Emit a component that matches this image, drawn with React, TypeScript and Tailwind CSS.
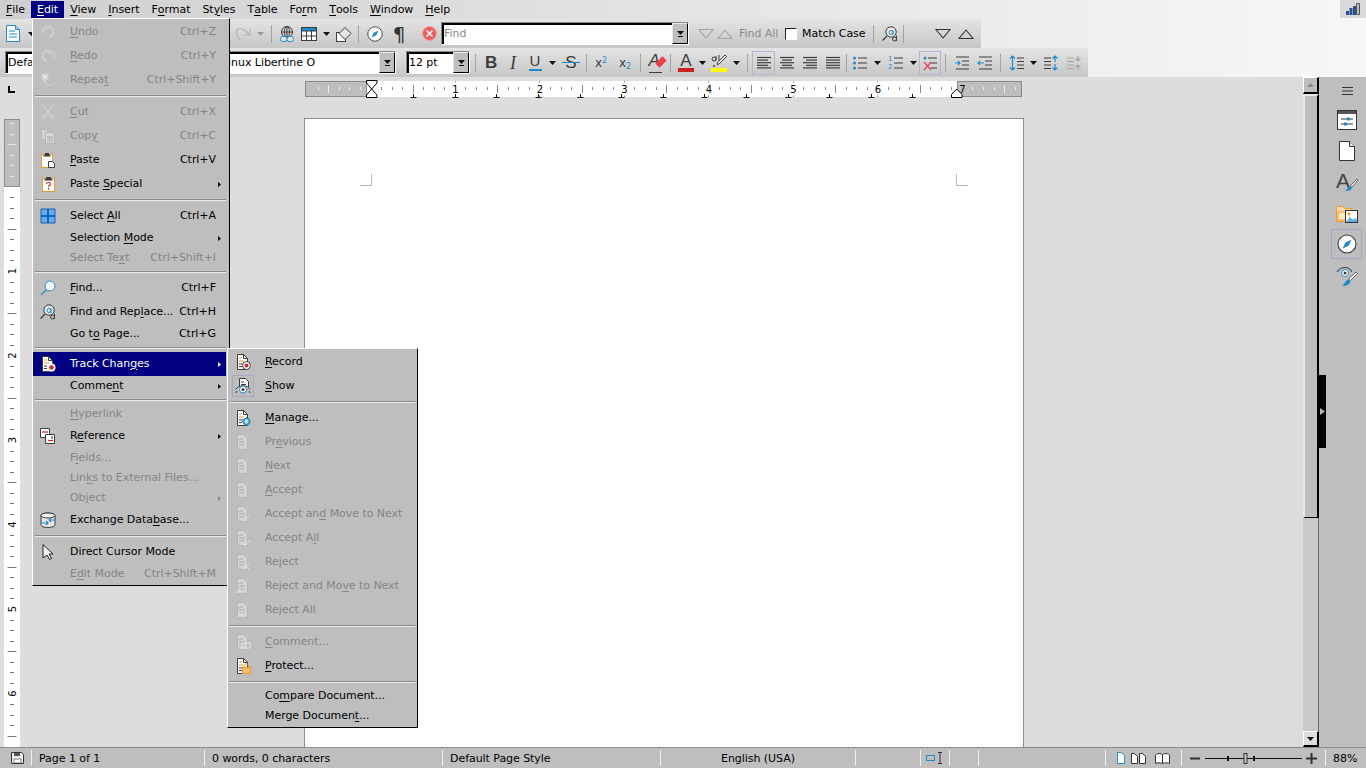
import React from 'react'

const DARK = '#3c3c3c'
const BLUE = '#1e8bcd'
const RED = '#d8232a'
const ORANGE = '#f0982e'
const GHOST = '#d2d2d2'
const GHOST2 = '#a9a9a9'

type SvgProps = { w?: number; h?: number; vb?: string; children: React.ReactNode }
const Ico = ({ w = 16, h = 16, vb, children }: SvgProps) => (
  <svg width={w} height={h} viewBox={vb ?? `0 0 ${w} ${h}`} fill="none" className="block shrink-0">
    {children}
  </svg>
)

// the little page with ruled lines that most Track Changes icons start from
const TrackPage = ({ children }: { children?: React.ReactNode }) => (
  <Ico>
    <path d="M2.5.5h6l4 4v11h-10z" fill="#fff" stroke={DARK} />
    <path d="M8.5.5v4h4" stroke={DARK} />
    <path d="M4 4h3M4 7h5" stroke={ORANGE} />
    <path d="M4 10h4M4 12.5h3" stroke={DARK} />
    {children}
  </Ico>
)

const GhostPage = ({ children }: { children?: React.ReactNode }) => (
  <Ico>
    <path d="M2.5.5h6l4 4v11h-10z" fill="#d4d4d4" stroke={GHOST2} strokeOpacity=".6" />
    <path d="M4 5h4M4 8h6M4 11h5" stroke={GHOST2} />
    {children}
  </Ico>
)

const GhostUndo = () => (
  <Ico>
    <path d="M2 5l5 6M2 5h6M2 5v6" stroke={GHOST} />
    <path d="M4 4c5-3 10 0 9 5-.4 2-2 4-4 4" stroke={GHOST} strokeWidth="1.3" />
  </Ico>
)
const GhostRedo = () => (
  <Ico>
    <path d="M14 5v6M14 5H8" stroke={GHOST} />
    <path d="M12 4C7 1 2 4 3 9c.4 2 2 4 4 4" stroke={GHOST} strokeWidth="1.3" />
  </Ico>
)
const GhostRepeat = () => (
  <Ico>
    <path d="M5 8c-1 5 6 8 9 3" stroke={GHOST} />
    <path d="M5 1v8M1 5h8M2 2l6 6M8 2L2 8" stroke="#ececec" />
  </Ico>
)
const GhostCut = () => (
  <Ico>
    <path d="M3 1l8 10M13 1L5 11" stroke={GHOST} strokeWidth="1.2" />
    <circle cx="4" cy="13" r="2" stroke={GHOST} />
    <circle cx="12" cy="13" r="2" stroke={GHOST} />
  </Ico>
)
const GhostCopy = () => (
  <Ico>
    <path d="M1.5 1.5h6v10h-6z" fill="#d4d4d4" stroke={GHOST2} strokeOpacity=".5" />
    <path d="M5.5 4.5h6l3 3v8h-9z" fill="#d8d8d8" stroke={GHOST2} strokeOpacity=".7" />
    <path d="M7 9h6M7 11h6M7 13h6" stroke={GHOST2} />
  </Ico>
)
const Paste = () => (
  <Ico>
    <rect x="1.5" y="2.5" width="11" height="13" fill="#fff" stroke={ORANGE} />
    <path d="M5 3V1h4v2h1.5v1.500h-7V3z" fill={DARK} />
    <path d="M8.500 9.500h4l2 2v4h-6z" fill="#fff" stroke={DARK} />
  </Ico>
)
const PasteSpecial = () => (
  <Ico>
    <rect x="2.500" y="2.500" width="12" height="13" fill="#fff" stroke={ORANGE} />
    <path d="M6 3V1h5v2h1.500v1.500h-8V3z" fill={DARK} />
    <path d="M6.500 8c0-2 4-2 4 0 0 1.500-2 1.500-2 3" stroke={RED} strokeWidth="1.200" />
    <path d="M8 12h1.200v1.500H8z" fill={RED} />
  </Ico>
)
const SelectAll = () => (
  <Ico>
    <rect x=".5" y=".5" width="15" height="15" fill="#1565b5" />
    <path d="M1.500 1.500h5.500v5.500H1.500zM9 1.500h5.500v5.500H9zM1.500 9h5.500v5.500H1.500zM9 9h5.500v5.500H9z" fill="#62aee8" />
  </Ico>
)
const Find = () => (
  <Ico>
    <circle cx="10" cy="6" r="5" fill="#f4f8fb" stroke={BLUE} />
    <path d="M6 10l-5 5" stroke={BLUE} strokeWidth="1.200" />
  </Ico>
)
const FindReplace = () => (
  <Ico>
    <circle cx="9" cy="6" r="5.200" fill="#ececec" stroke={DARK} />
    <path d="M5 10l-4.500 4.500" stroke={DARK} strokeWidth="1.200" />
    <circle cx="9" cy="6.500" r="2" stroke={BLUE} />
    <path d="M11 4v5" stroke={BLUE} />
    <circle cx="12.500" cy="13" r="2" stroke={DARK} />
    <path d="M14.500 9.500V15" stroke={DARK} />
  </Ico>
)
const Record = () => (
  <TrackPage>
    <circle cx="11.500" cy="11.500" r="4" fill="#fff" stroke={DARK} />
    <circle cx="11.500" cy="11.500" r="2" fill={RED} />
  </TrackPage>
)
const Show = () => (
  <Ico>
    <path d="M4.500.5h6l3 3v8h-9z" fill="#fff" stroke={DARK} />
    <path d="M6 4h3M6 6.500h5" stroke={DARK} />
    <path d="M.5 11.500c4-5 11-5 15 0" stroke={DARK} fill="#d5d5d5" />
    <circle cx="8" cy="11.500" r="3.500" fill="#fff" stroke={BLUE} />
    <circle cx="8" cy="11.500" r="1.500" fill={DARK} />
    <path d="M2 13l-1 2M14 13l1 2" stroke={DARK} />
  </Ico>
)
const Manage = () => (
  <TrackPage>
    <circle cx="11.500" cy="11.500" r="3" fill="#cfe6f6" stroke={BLUE} strokeWidth="1.600" />
    <path d="M11.500 7v2M11.500 14v2M7 11.500h2M14 11.500h2" stroke={BLUE} />
  </TrackPage>
)
const Protect = () => (
  <TrackPage>
    <rect x="7.500" y="9.500" width="8" height="6" fill="#f7b96b" stroke={ORANGE} />
    <path d="M9.500 9.500v-2c0-2 4-2 4 0v2" stroke={ORANGE} />
  </TrackPage>
)
const TrackBadge = () => (
  <Ico>
    <path d="M2.500.5h6l4 4v11h-10z" fill="#fff" stroke="#3c3c3c" />
    <path d="M8.500.5v4h4" stroke={DARK} />
    <path d="M4 4h3M4 7h5" stroke={ORANGE} />
    <path d="M4 10h3M4 12.500h3" stroke={DARK} />
    <circle cx="11.500" cy="11.500" r="4" fill="#fff" />
    <circle cx="11.500" cy="11.500" r="2.200" fill={RED} />
  </Ico>
)
const Reference = () => (
  <Ico>
    <path d="M.5.5h9v9h-9z" fill="#fff" stroke={DARK} />
    <path d="M2 4h6" stroke={RED} strokeWidth="1.200" />
    <path d="M5.500 6.500h9v9h-9z" fill="#fff" stroke={DARK} />
    <path d="M8 12.500h5" stroke={RED} strokeWidth="1.200" />
    <path d="M12 8v3" stroke={DARK} />
  </Ico>
)
const ExchangeDb = () => (
  <Ico>
    <ellipse cx="8" cy="3.500" rx="7" ry="2.500" fill="#efefef" stroke={DARK} />
    <path d="M1 3.500v9c0 2 3 3 7 3s7-1 7-3v-9" fill="#e6e6e6" stroke={DARK} />
    <ellipse cx="8" cy="3.500" rx="7" ry="2.500" fill="#f4f4f4" stroke={DARK} />
    <path d="M1 11h7M6 9l2 2-2 2M15 8H9M11 6L9 8l2 2" stroke={BLUE} strokeWidth="1.100" />
  </Ico>
)
const Cursor = () => (
  <Ico>
    <path d="M3 .5l10 9.500H9l2.500 4.500-2 1L7 11l-4 3z" fill="#f4f4f4" stroke="#222" />
  </Ico>
)

const GP = (d: string) => <path d={d} stroke="#e2e2e2" />

type MenuItem =
  | 'sep'
  | { t: string; k?: string; icon?: React.ReactNode; off?: boolean; sub?: boolean; on?: boolean; frame?: boolean; h?: boolean }

const editMenu: MenuItem[] = [
  { t: '&Undo', k: 'Ctrl+Z', icon: <GhostUndo />, off: true, h: true },
  { t: '&Redo', k: 'Ctrl+Y', icon: <GhostRedo />, off: true, h: true },
  { t: 'Repea&t', k: 'Ctrl+Shift+Y', icon: <GhostRepeat />, off: true, h: true },
  'sep',
  { t: '&Cut', k: 'Ctrl+X', icon: <GhostCut />, off: true, h: true },
  { t: 'Cop&y', k: 'Ctrl+C', icon: <GhostCopy />, off: true, h: true },
  { t: '&Paste', k: 'Ctrl+V', icon: <Paste />, h: true },
  { t: 'Paste &Special', icon: <PasteSpecial />, sub: true, h: true },
  'sep',
  { t: 'Select &All', k: 'Ctrl+A', icon: <SelectAll />, h: true },
  { t: 'Selection &Mode', sub: true },
  { t: 'Select Te&xt', k: 'Ctrl+Shift+I', off: true },
  'sep',
  { t: '&Find...', k: 'Ctrl+F', icon: <Find />, h: true },
  { t: 'Find and Rep&lace...', k: 'Ctrl+H', icon: <FindReplace />, h: true },
  { t: 'Go t&o Page...', k: 'Ctrl+G' },
  'sep',
  { t: 'Track Chan&ges', icon: <TrackBadge />, sub: true, on: true, h: true },
  { t: 'Comme&nt', sub: true },
  'sep',
  { t: '&Hyperlink', off: true },
  { t: 'R&eference', icon: <Reference />, sub: true, h: true },
  { t: 'F&ields...', off: true },
  { t: 'Lin&ks to External Files...', off: true },
  { t: 'Ob&ject', off: true, sub: true },
  { t: 'Exchange Data&base...', icon: <ExchangeDb />, h: true },
  'sep',
  { t: 'Direct Cursor Mode', icon: <Cursor />, h: true },
  { t: 'E&dit Mode', k: 'Ctrl+Shift+M', off: true },
]

const trackMenu: MenuItem[] = [
  { t: '&Record', icon: <Record />, h: true },
  { t: '&Show', icon: <Show />, h: true, frame: true },
  'sep',
  { t: '&Manage...', icon: <Manage />, h: true },
  { t: 'Pr&evious', icon: <GhostPage />, off: true, h: true },
  { t: '&Next', icon: <GhostPage />, off: true, h: true },
  { t: '&Accept', icon: <GhostPage />, off: true, h: true },
  { t: 'Accept an&d Move to Next', icon: <GhostPage>{GP('M9 15l5-5')}</GhostPage>, off: true, h: true },
  { t: 'Accept A&ll', icon: <GhostPage>{GP('M8 14l3 1 4-5')}</GhostPage>, off: true, h: true },
  { t: 'Re&ject', icon: <GhostPage>{GP('M9 10l5 5M14 10l-5 5')}</GhostPage>, off: true, h: true },
  { t: 'Reject and Mo&ve to Next', icon: <GhostPage>{GP('M1 15l5-5')}</GhostPage>, off: true, h: true },
  { t: 'Reject All', icon: <GhostPage>{GP('M3 10l5 5M8 10l-5 5')}</GhostPage>, off: true, h: true },
  'sep',
  { t: '&Comment...', icon: <GhostPage>{GP('M7 9h8v5H7z')}</GhostPage>, off: true, h: true },
  { t: '&Protect...', icon: <Protect />, h: true },
  'sep',
  { t: 'Co&mpare Document...' },
  { t: 'Merge Documen&t...' },
]

const Mn = ({ t }: { t: string }) => {
  const i = t.indexOf('&')
  if (i < 0) return <>{t}</>
  return (
    <>
      {t.slice(0, i)}
      <u className="underline-offset-2">{t[i + 1]}</u>
      {t.slice(i + 2)}
    </>
  )
}

const MenuRows = ({ items }: { items: MenuItem[] }) => (
  <>
    {items.map((m, i) => {
      if (m === 'sep') {
        return (
          <div key={i} className="flex h-[8px] items-center pl-[2px]">
            <div className="h-[2px] w-full border-t border-[#8a8a8a] bg-[#ececec]" />
          </div>
        )
      }
      return (
        <div
          key={i}
          className={`flex items-center whitespace-nowrap ${m.h ? 'h-[24px]' : 'h-[20px]'} ${
            m.on ? 'bg-[#000080] text-white' : m.off ? 'text-[#858585]' : 'text-black'
          }`}
        >
          <div className="flex w-[37px] shrink-0 pl-[7px]">
            <span className="relative block">
              {m.frame && <span className="absolute -inset-[3px] border border-[#a6a6c8]" />}
              {m.icon}
            </span>
          </div>
          <span>
            <Mn t={m.t} />
          </span>
          {m.k && <span className="ml-auto pr-[10px]">{m.k}</span>}
          {m.sub && (
            <svg width="3" height="5" viewBox="0 0 3 5" className="ml-auto mr-[5px]">
              <path d="M0 0l3 2.500L0 5z" fill={m.on ? '#fff' : m.off ? '#858585' : '#000'} />
            </svg>
          )}
        </div>
      )
    })}
  </>
)

const menuNames = ['&File', '&Edit', '&View', '&Insert', 'F&ormat', 'St&yles', 'T&able', 'Fo&rm', '&Tools', '&Window', '&Help']

const Tb = ({ w = 'w-[22px]', children }: { w?: string; children?: React.ReactNode }) => (
  <div className={`flex h-full shrink-0 items-center justify-center ${w}`}>{children}</div>
)
const Dd = ({ w = 'w-[12px]', off }: { w?: string; off?: boolean }) => (
  <Tb w={w}>
    <svg width="7" height="4" viewBox="0 0 7 4">
      <path d="M0 0h7L3.500 4z" fill={off ? '#9b9b9b' : '#111'} />
    </svg>
  </Tb>
)
const Sep = ({ w = 'w-[9px]' }: { w?: string }) => (
  <Tb w={w}>
    <div className="h-[18px] w-px bg-[#a3a3a3]" />
  </Tb>
)

const Combo = ({ w, children, muted }: { w: string; children?: React.ReactNode; muted?: boolean }) => (
  <div className={`flex h-[23px] shrink-0 items-stretch border border-t-[#8a8a8a] border-l-[#8a8a8a] border-r-white border-b-white ${w}`}>
    <div className="flex flex-1 items-stretch overflow-hidden border-t-2 border-l-2 border-black bg-white">
      <span className={`truncate leading-[18px] ${muted ? 'text-[#8a8a8a]' : 'text-black'}`}>{children}</span>
    </div>
    <div className="flex w-[16px] items-center justify-center border border-t-[#e8e8e8] border-l-[#e8e8e8] border-r-black border-b-black bg-[#bebebe]">
      <svg width="7" height="6" viewBox="0 0 7 6">
        <path d="M0 0h7L3.500 4z" fill="#111" />
        <path d="M1 5.500h5" stroke="#111" />
      </svg>
    </div>
  </div>
)

const Tri = ({ up, off }: { up?: boolean; off?: boolean }) => (
  <svg width="16" height="10" viewBox="0 0 16 10" fill="none">
    <path d={up ? 'M1 9.500h14L8 1z' : 'M1 .5h14L8 9z'} stroke={off ? '#a5a5a5' : '#333'} strokeWidth="1.100" />
  </svg>
)

const LinesIcon = ({ rows }: { rows: [number, number][] }) => (
  <Ico>
    {rows.map(([x, l], i) => (
      <path key={i} d={`M${x} ${2.5 + i * 2.6}h${l}`} stroke={DARK} strokeWidth="1.200" />
    ))}
  </Ico>
)

const Navigator = ({ size = 16 }: { size?: number }) => (
  <Ico w={size} h={size} vb="0 0 16 16">
    <circle cx="8" cy="8" r="7.200" fill="#fff" stroke={DARK} strokeWidth=".9" />
    <path d="M11.500 4.500L9.300 9.300 4.500 11.500l2.200-4.800z" fill={BLUE} />
  </Ico>
)

const RulerTop = () => {
  const o = 65.4
  const step = 84.5 / 8
  const ticks = []
  for (let i = -5; i <= 61; i++) {
    if (i % 8 === 0) continue
    const x = Math.round(o + i * step) + 0.5
    const half = i % 4 === 0
    const grey = i < 0 || i > 55
    ticks.push(
      <path key={i} d={half ? `M${x} 4v8` : `M${x} 6v3`} stroke={grey ? '#ececec' : '#8a8a8a'} />,
    )
  }
  return (
    <svg width="717" height="16" viewBox="0 0 717 16" className="block overflow-visible">
      <rect x="0" y="0" width="717" height="16" fill="#fff" />
      <rect x=".5" y=".5" width="61" height="15" fill="#bebebe" stroke="#8a8a8a" />
      <rect x="652.500" y=".5" width="64" height="15" fill="#bebebe" stroke="#8a8a8a" />
      {ticks}
      {[1, 2, 3, 4, 5, 6].map((n) => (
        <path key={n} d={`M${Math.round(o + n * 84.5) + 0.5} 0v1.500M${Math.round(o + n * 84.5) + 0.5} 14.500v1.500`} stroke="#8a8a8a" />
      ))}
      {[...Array(13)].map((_, k) => {
        const x = Math.round(66.6 + 41.6 * (k + 1)) + 0.5
        return <path key={k} d={`M${x} 13v3.500M${x - 3} 16.500h6`} stroke="#111" />
      })}
      <path d="M61.500 -.5H72V2L66.700 8 61.500 2zM66.700 8L72 14v2.500H61.500V14z" fill="#fff" stroke="#000" />
      <path d="M651.700 8L657 13.500v3h-10.500v-3z" fill="#fff" stroke="#000" />
      {[1, 2, 3, 4, 5, 6, 7].map((n) => (
        <text key={n} x={o + n * 84.5 + 0.5} y="12" textAnchor="middle" fontSize="10" fill="#000" className="font-['DejaVu_Sans']">
          {n}
        </text>
      ))}
    </svg>
  )
}

const RulerLeft = () => {
  const o = 67.5
  const step = 84.5 / 8
  const ticks = []
  for (let i = -6; i <= 52; i++) {
    if (i % 8 === 0) continue
    const y = Math.round(o + i * step) + 0.5
    const half = i % 4 === 0
    ticks.push(<path key={i} d={half ? `M3.500 ${y}h9` : `M6 ${y}h4`} stroke={i < 0 ? '#e4e4e4' : '#777'} />)
  }
  return (
    <svg width="16" height="628" viewBox="0 0 16 628" className="block">
      <rect width="16" height="628" fill="#fff" />
      <rect x=".5" y=".5" width="15" height="67" fill="#bebebe" stroke="#8a8a8a" />
      {ticks}
      {[1, 2, 3, 4, 5, 6].map((n) => {
        const y = o + n * 84.5
        return (
          <text key={n} x="8" y={y + 3.500} textAnchor="middle" fontSize="10" fill="#000" transform={`rotate(-90 8 ${y})`} className="font-['DejaVu_Sans']">
            {n}
          </text>
        )
      })}
    </svg>
  )
}

const StatusCell = ({ w, children, center }: { w: string; children?: React.ReactNode; center?: boolean }) => (
  <div className={`flex h-full shrink-0 items-center pt-[2px] ${w} ${center ? 'justify-center' : 'pl-[7px]'}`}>{children}</div>
)
const StatusSep = () => <div className="h-[16px] w-px shrink-0 self-center border-r border-[#efefef] bg-[#808080]" />

export default function App() {
  return (
    <div className="relative flex h-[768px] w-[1366px] flex-col overflow-hidden bg-[#dedddb] font-['DejaVu_Sans',sans-serif] text-[11px] tracking-[-0.05px] text-black">
      {/* header: menu bar and two toolbars on a sideways gradient */}
      <div className="flex h-[77px] shrink-0 flex-col bg-linear-to-r from-[#cfcfcf] via-[#e4e4e4] to-[#f7f7f7]">
        <div className="flex h-[19px] shrink-0 items-start justify-between">
          <div className="flex pt-px">
            {menuNames.map((n) => (
              <div key={n} className={`flex h-[17px] items-center px-[6px] pt-px ${n === '&Edit' ? 'bg-[#000080] text-white' : ''}`}>
                <Mn t={n} />
              </div>
            ))}
          </div>
          <div className="flex h-[18px] w-[26px] items-center justify-center bg-[#d9d9d9]">
            <svg width="14" height="12" viewBox="0 0 14 12">
              <path d="M0 8h3v4H0zM3.500 5h3v7h-3zM7 3h3v9H7z" fill="#2f4f8f" />
              <path d="M10.500.5h3v11h-3z" fill="#bcbcbc" stroke="#555" />
            </svg>
          </div>
        </div>

        <div className="flex h-[29px] w-[981px] shrink-0 items-center bg-linear-to-b from-[#e4e4e4] to-[#c6c6c6]">
          <Tb w="w-[26px]">
            <svg width="14" height="17" viewBox="0 0 14 17">
              <path d="M.5.5h9l4 4v12H.5z" fill="#fff" stroke={BLUE} />
              <path d="M9.500.5v4h4" fill="#9fd0ef" stroke={BLUE} />
              <path d="M3 6h6M3 9h8M3 12h8" stroke={BLUE} />
            </svg>
          </Tb>
          <Dd w="w-[10px]" />
          <div className="w-[196px] shrink-0" />
          <Tb>
            <svg width="16" height="14" viewBox="0 0 16 14" fill="none">
              <path d="M15 2v6h-6" stroke="#b4b4b4" strokeWidth="1.100" />
              <path d="M14.500 7.500C11 3 6 1 3 2c-2.500 1-2 7 2 11" stroke="#b4b4b4" strokeWidth="1.200" />
            </svg>
          </Tb>
          <Dd off />
          <Sep w="w-[10px]" />
          <Tb>
            <Ico>
              <circle cx="8" cy="6" r="5.500" stroke={DARK} />
              <ellipse cx="8" cy="6" rx="2.500" ry="5.500" stroke={DARK} />
              <path d="M2.500 6h11M8 .5v11" stroke={DARK} />
              <rect x="1.500" y="10.500" width="6.500" height="5" rx="2" fill="#e2e2e2" stroke={BLUE} />
              <rect x="8" y="10.500" width="6.500" height="5" rx="2" fill="#e2e2e2" stroke={BLUE} />
            </Ico>
          </Tb>
          <Tb>
            <Ico>
              <rect x=".5" y="1.500" width="15" height="13" fill="#fff" stroke={DARK} />
              <rect x="1" y="2" width="14" height="3" fill={BLUE} />
              <path d="M.5 5h15M.5 10h15M5.500 5v10M10.500 5v10" stroke={DARK} />
            </Ico>
          </Tb>
          <Dd />
          <div className="w-px shrink-0" />
          <Tb>
            <Ico>
              <rect x=".5" y="6.500" width="9" height="9" fill="#fff" stroke={DARK} />
              <path d="M9 1.500l6 6-6 6-6-6z" fill="#e4e4e4" stroke={DARK} />
            </Ico>
          </Tb>
          <Sep w="w-[7px]" />
          <div className="w-[2px] shrink-0" />
          <Tb>
            <Navigator />
          </Tb>
          <div className="w-[2px] shrink-0" />
          <Tb>
            <span className="text-[20px] leading-none text-[#333]">¶</span>
          </Tb>
          <div className="w-[8px] shrink-0" />
          <Tb>
            <svg width="15" height="15" viewBox="0 0 15 15">
              <circle cx="7.500" cy="7.500" r="7" fill="#ee5d5d" stroke="#f3a9a9" />
              <path d="M4.500 4.500l6 6M10.500 4.500l-6 6" stroke="#fff" strokeWidth="1.600" />
            </svg>
          </Tb>
          <div className="w-px shrink-0" />
          <Combo w="w-[248px]" muted>
            Find
          </Combo>
          <div className="w-[7px] shrink-0" />
          <Tb w="w-[19px]">
            <Tri off />
          </Tb>
          <Tb w="w-[19px]">
            <Tri up off />
          </Tb>
          <span className="ml-[5px] w-[46px] shrink-0 whitespace-nowrap pt-px text-[#8a8a8a]">Find All</span>
          <div className="h-[12px] w-[12px] shrink-0 border border-t-[#222] border-l-[#222] border-r-white border-b-white bg-white" />
          <span className="ml-[5px] w-[64px] shrink-0 whitespace-nowrap pt-px">Match Case</span>
          <Sep w="w-[14px]" />
          <Tb w="w-[20px]">
            <FindReplace />
          </Tb>
          <Sep w="w-[6px]" />
          <div className="w-[25px] shrink-0" />
          <Tb w="w-[23px]">
            <Tri />
          </Tb>
          <Tb w="w-[23px]">
            <Tri up />
          </Tb>
        </div>

        <div className="flex h-[29px] w-[1088px] shrink-0 items-center bg-linear-to-b from-[#e4e4e4] to-[#c6c6c6]">
          <div className="w-[5px] shrink-0" />
          <Combo w="w-[206px]">Defa</Combo>
          <div className="w-[4px] shrink-0" />
          <Combo w="w-[181px]">
            <span className="pl-[4px]">Linux Libertine O</span>
          </Combo>
          <div className="w-[10px] shrink-0" />
          <Combo w="w-[64px]">12 pt</Combo>
          <Sep w="w-[10px]" />
          <Tb>
            <span className="font-['Liberation_Sans'] text-[17px] font-bold leading-none text-[#3c3c3c]">B</span>
          </Tb>
          <Tb>
            <span className="font-['Liberation_Serif'] text-[18px] italic leading-none text-[#3c3c3c]">I</span>
          </Tb>
          <Tb>
            <div className="flex flex-col items-center">
              <span className="font-['Liberation_Sans'] text-[15px] leading-[14px] text-[#3c3c3c]">U</span>
              <div className="mt-px h-[2px] w-[13px] bg-[#1e8bcd]" />
            </div>
          </Tb>
          <Dd />
          <div className="w-[2px] shrink-0" />
          <Tb>
            <div className="relative font-['Liberation_Sans'] text-[17px] leading-none text-[#3c3c3c]">
              S<div className="absolute -left-[3px] -right-[3px] top-[8px] h-px bg-[#1e8bcd]" />
            </div>
          </Tb>
          <Sep w="w-[8px]" />
          <Tb>
            <span className="text-[12px] leading-none text-[#3c3c3c]">
              x<sup className="text-[8px] text-[#1e8bcd]">2</sup>
            </span>
          </Tb>
          <div className="w-[2px] shrink-0" />
          <Tb>
            <span className="text-[12px] leading-none text-[#3c3c3c]">
              x<sub className="text-[8px] text-[#1e8bcd]">2</sub>
            </span>
          </Tb>
          <Sep w="w-[8px]" />
          <Tb>
            <div className="relative">
              <span className="font-['Liberation_Sans'] text-[17px] italic leading-none text-[#3c3c3c]">A</span>
              <div className="absolute left-[7px] top-[7px] h-[6px] w-[10px] -rotate-45 bg-[#e9414b]" />
              <div className="h-px w-[13px] bg-[#3c3c3c]" />
            </div>
          </Tb>
          <Sep />
          <Tb>
            <div className="flex flex-col items-center">
              <span className="font-['Liberation_Sans'] text-[17px] leading-[15px] text-[#3c3c3c]">A</span>
              <div className="h-[4px] w-[16px] bg-[#c9211e]" />
            </div>
          </Tb>
          <Dd w="w-[10px]" />
          <div className="w-px shrink-0" />
          <Tb>
            <div className="relative flex flex-col items-center">
              <svg width="16" height="14" viewBox="0 0 16 14" fill="none">
                <path d="M14 1l1.500 1.500L8 10l-2 .5.500-2z" fill="#eee" stroke={DARK} />
                <circle cx="3" cy="5" r="2" stroke={DARK} />
                <path d="M5 2v5" stroke={DARK} />
                <path d="M8 1v5.500" stroke={DARK} />
                <circle cx="3" cy="12" r="1" fill={DARK} />
              </svg>
              <div className="h-[4px] w-[16px] bg-[#ffff00]" />
            </div>
          </Tb>
          <Dd />
          <Sep w="w-[10px]" />
          <Tb w="w-[23px]">
            <div className="flex h-[24px] w-[23px] items-center justify-center border border-[#b5b5d2]">
              <LinesIcon rows={[[1, 14], [1, 11], [1, 14], [1, 11], [1, 14]]} />
            </div>
          </Tb>
          <Tb w="w-[23px]">
            <LinesIcon rows={[[1, 14], [3, 10], [1, 14], [3, 10], [1, 14]]} />
          </Tb>
          <Tb w="w-[23px]">
            <LinesIcon rows={[[1, 14], [4, 11], [1, 14], [4, 11], [1, 14]]} />
          </Tb>
          <Tb w="w-[23px]">
            <LinesIcon rows={[[1, 14], [1, 14], [1, 14], [1, 14], [1, 14]]} />
          </Tb>
          <Sep w="w-[5px]" />
          <Tb>
            <Ico>
              <path d="M6 3h9M6 8h9M6 13h9" stroke={DARK} strokeWidth="1.200" />
              <circle cx="2.500" cy="3" r="1.500" fill={BLUE} />
              <circle cx="2.500" cy="8" r="1.500" fill={BLUE} />
              <circle cx="2.500" cy="13" r="1.500" fill={BLUE} />
            </Ico>
          </Tb>
          <Dd />
          <div className="w-[2px] shrink-0" />
          <Tb>
            <Ico>
              <path d="M6 3h9M6 8h9M6 13h9" stroke={DARK} strokeWidth="1.200" />
              <text x="0" y="6" fontSize="7" fill={BLUE} className="font-['DejaVu_Sans']">1</text>
              <text x="0" y="14" fontSize="7" fill={BLUE} className="font-['DejaVu_Sans']">2</text>
            </Ico>
          </Tb>
          <Dd />
          <Tb>
            <div className="flex h-[24px] w-[22px] items-center justify-center border border-[#b5b5d2]">
              <Ico>
                <path d="M6 3h9M9 8h6M9 13h6" stroke={DARK} strokeWidth="1.200" />
                <circle cx="3" cy="3" r="1.500" fill={BLUE} />
                <path d="M2 7l7 8M9 7l-7 8" stroke="#e9414b" strokeWidth="1.300" />
              </Ico>
            </div>
          </Tb>
          <Sep />
          <Tb w="w-[23px]">
            <Ico>
              <path d="M2 2h13M8 6h7M8 10h7M2 14h13" stroke={DARK} strokeWidth="1.200" />
              <path d="M1 8h5M4 6l2 2-2 2" stroke={BLUE} strokeWidth="1.100" />
            </Ico>
          </Tb>
          <Tb w="w-[23px]">
            <Ico>
              <path d="M2 2h13M8 6h7M8 10h7M2 14h13" stroke={DARK} strokeWidth="1.200" />
              <path d="M7 8H1M3 6L1 8l2 2" stroke={BLUE} strokeWidth="1.100" />
            </Ico>
          </Tb>
          <Sep />
          <div className="w-px shrink-0" />
          <Tb>
            <Ico>
              <path d="M3.500 1v14M1 3.500L3.500 1 6 3.500M1 12.500L3.500 15 6 12.500" stroke={BLUE} strokeWidth="1.200" />
              <path d="M8 3h7M8 6.500h7M8 10h7M8 13.500h7" stroke={DARK} strokeWidth="1.200" />
            </Ico>
          </Tb>
          <Dd w="w-[10px]" />
          <div className="w-[2px] shrink-0" />
          <Tb>
            <Ico>
              <path d="M1 3h7M1 6.500h7M1 10h7M1 13.500h7" stroke={DARK} strokeWidth="1.200" />
              <path d="M12 7V1M9.500 3.500L12 1l2.500 2.500M12 9v6M9.500 12.500L12 15l2.500-2.500" stroke={BLUE} strokeWidth="1.200" />
            </Ico>
          </Tb>
          <div className="w-px shrink-0" />
          <Tb>
            <Ico>
              <path d="M1 3h7M1 6.500h7M1 10h7M1 13.500h7" stroke="#a5a5a5" strokeWidth="1.200" />
              <path d="M12 1v5M9.500 3.500L12 6l2.500-2.500M12 15v-5M9.500 12.500L12 10l2.500 2.500" stroke="#a5a5a5" strokeWidth="1.200" />
            </Ico>
          </Tb>
        </div>
      </div>

      {/* work area */}
      <div className="flex min-h-0 flex-1">
        <div className="flex w-[20px] shrink-0 flex-col pl-[4px]">
          <div className="h-[42px] shrink-0 pl-[4px] pt-[9px]">
            <div className="h-[7px] w-[7px] border-b-2 border-l-2 border-black" />
          </div>
          <RulerLeft />
        </div>

        <div className="min-w-0 flex-1 overflow-hidden pl-[284px]">
          <div className="pl-px pt-[4px]">
            <RulerTop />
          </div>
          <div className="mt-[21px] flex h-[700px] w-[720px] items-start justify-between border border-[#8f8f8f] bg-white px-[55px] pt-[55px]">
            <div className="h-[12px] w-[12px] border-b border-r border-[#b8b8b8]" />
            <div className="h-[12px] w-[12px] border-b border-l border-[#b8b8b8]" />
          </div>
        </div>

        <div className="flex w-[16px] shrink-0 flex-col">
          <div className="flex h-[17px] shrink-0 items-center justify-center border-b-2 border-r-2 border-b-black border-r-black border-l border-t border-l-white border-t-white bg-[#bebebe]">
            <svg width="7" height="4" viewBox="0 0 7 4">
              <path d="M0 4h7L3.500 0z" fill="#8a8a8a" />
            </svg>
          </div>
          <div className="h-[424px] shrink-0 border-b border-r-2 border-l-2 border-t-2 border-b-black border-r-black border-l-[#e8e8e8] border-t-[#e8e8e8] bg-[#bebebe]" />
          <div className="flex-1 border-r border-[#6a6a6a] bg-[#c9c9c9]" />
          <div className="flex h-[16px] shrink-0 items-center justify-center border-b-2 border-r-2 border-b-black border-r-black border-l border-t border-l-white border-t-white bg-[#dcdcdc]">
            <svg width="7" height="4" viewBox="0 0 7 4">
              <path d="M0 0h7L3.500 4z" fill="#111" />
            </svg>
          </div>
        </div>

        <div className="relative flex w-[47px] shrink-0 flex-col items-center bg-[#bebebe] pl-[9px]">
          <div className="absolute left-0 top-[298px] flex h-[73px] w-[7px] items-center justify-center bg-black">
            <svg width="5" height="7" viewBox="0 0 5 7">
              <path d="M0 0l5 3.500L0 7z" fill="#b5b5b5" />
            </svg>
          </div>
          <div className="flex h-[27px] shrink-0 items-center">
            <svg width="11" height="8" viewBox="0 0 11 8">
              <path d="M0 .5h11M0 4h11M0 7.500h11" stroke="#333" />
            </svg>
          </div>
          <div className="flex h-[31px] shrink-0 items-center">
            <Ico w={20} h={20}>
              <rect x=".5" y=".5" width="19" height="19" fill="#fff" stroke="#333" />
              <rect x="1" y="1" width="18" height="3" fill="#555" />
              <path d="M4 9h12M4 14h12" stroke="#333" />
              <rect x="10" y="7.500" width="3" height="3" fill={BLUE} />
              <rect x="7" y="12.500" width="3" height="3" fill={BLUE} />
            </Ico>
          </div>
          <div className="flex h-[31px] shrink-0 items-center">
            <Ico w={16} h={20}>
              <path d="M.5.5h10l5 5v14H.5z" fill="#fff" stroke="#333" />
              <path d="M10.500.5v5h5" fill="#eee" stroke="#333" />
            </Ico>
          </div>
          <div className="flex h-[31px] shrink-0 items-center">
            <div className="relative h-[20px] w-[22px]">
              <span className="absolute -top-[2px] left-0 font-['Liberation_Sans'] text-[21px] leading-none text-[#444]">A</span>
              <svg width="14" height="14" viewBox="0 0 14 14" className="absolute bottom-0 right-0">
                <path d="M13 1l1 1-6 7-2-1z" fill="#fff" stroke="#444" strokeWidth=".8" />
                <path d="M6 8l2 2c-1 3-5 3-7 3 2-1 2-4 5-5z" fill={BLUE} />
              </svg>
            </div>
          </div>
          <div className="flex h-[31px] shrink-0 items-center">
            <Ico w={23} h={20}>
              <path d="M.5 3.500v15h15v-13h-7l-2-2z" fill="#fbd9a3" stroke={ORANGE} />
              <path d="M2 9h20l-3 8H2z" fill="#ffe8c4" stroke={ORANGE} />
              <rect x="9.500" y="7.500" width="12" height="12" fill="#fff" stroke="#333" />
              <circle cx="13" cy="11" r="1.500" fill={ORANGE} />
              <path d="M10 19l4-5 3 3 2-2 2 2v2z" fill="#62aee8" />
            </Ico>
          </div>
          <div className="flex h-[31px] shrink-0 items-center">
            <div className="relative">
              <span className="absolute -bottom-[5px] -left-[6px] -right-[5px] -top-[5px] border border-[#a6a6c8]" />
              <Navigator size={20} />
            </div>
          </div>
          <div className="flex h-[31px] shrink-0 items-center pt-[3px]">
            <Ico w={22} h={21}>
              <path d="M1 6c4-6 12-6 15 0" stroke="#444" strokeWidth="1.100" />
              <circle cx="9" cy="7" r="3.500" fill="#fff" stroke={BLUE} />
              <circle cx="9" cy="7" r="1.500" fill={DARK} />
              <path d="M20 6l1.500 1.500-7 7L12.500 13z" fill="#fff" stroke="#444" strokeWidth=".8" />
              <path d="M12 13.500l2.500 2c-1 4-6 4.500-8.500 4.500 2.500-1 2.500-5 6-6.500z" fill={BLUE} />
            </Ico>
          </div>
        </div>
      </div>

      {/* status bar */}
      <div className="flex h-[21px] shrink-0 items-stretch border-t border-[#8c8c8c] bg-[#bebebe]">
        <div className="flex w-[31px] shrink-0 items-center pl-[11px]">
          <svg width="13" height="12" viewBox="0 0 13 12">
            <path d="M.5.5h10l2 2v9H.5z" fill="#eee" stroke="#333" />
            <path d="M3 1h6v3H3z" fill="#555" />
            <path d="M3 7h7v4H3z" fill="#fff" stroke="#333" strokeWidth=".6" />
          </svg>
        </div>
        <StatusSep />
        <StatusCell w="w-[172px]">Page 1 of 1</StatusCell>
        <StatusSep />
        <StatusCell w="w-[237px]">0 words, 0 characters</StatusCell>
        <StatusSep />
        <StatusCell w="w-[217px]">Default Page Style</StatusCell>
        <StatusSep />
        <StatusCell w="w-[194px]" center>
          English (USA)
        </StatusCell>
        <StatusSep />
        <StatusCell w="w-[64px]" />
        <StatusSep />
        <div className="flex w-[28px] shrink-0 items-center justify-center">
          <svg width="18" height="12" viewBox="0 0 18 12" fill="none">
            <rect x=".5" y="3.500" width="8" height="5" stroke={BLUE} />
            <path d="M12 .5h4M12 11.500h4M14 .5v11" stroke="#333" />
          </svg>
        </div>
        <StatusSep />
        <StatusCell w="w-[28px]" />
        <StatusSep />
        <StatusCell w="w-[126px]" />
        <StatusSep />
        <div className="flex w-[75px] shrink-0 items-center pl-[11px]">
          <svg width="60" height="12" viewBox="0 0 60 12" className="overflow-visible">
            <path d="M.5.5h4l3 3v8h-7z" fill="#fff" stroke={BLUE} />
            <path d="M14.500 1.500h3l3 3v7h-6zM22.500 1.500h3l3 3v7h-6z" fill="#fff" stroke="#333" />
            <path d="M38.500 3c2-2 5-2 7 0v8.500c-2-1-5-1-7 0zM45.500 3c2-2 5-2 7 0v8.500c-2-1-5-1-7 0z" fill="#fff" stroke="#333" />
          </svg>
        </div>
        <StatusSep />
        <div className="flex w-[143px] shrink-0 items-center pl-[8px]">
          <svg width="129" height="13" viewBox="0 0 129 13" className="block">
            <path d="M0 6.500h10M116 6.500h11M121.500 1v11" stroke="#333" strokeWidth="2" />
            <path d="M15 6.500h97" stroke="#111" />
            <path d="M37 4h2v5h-2zM63 4h2v5h-2z" fill="#111" />
            <rect x="54" y="1.500" width="3" height="10" fill="#c8c8c8" stroke="#333" />
          </svg>
        </div>
        <StatusSep />
        <StatusCell w="w-[40px]">88%</StatusCell>
      </div>

      {/* open menus lie over the window */}
      <div className="absolute left-[32px] top-[18px] w-[198px] border border-t-white border-l-white border-r-black border-b-black bg-[#bebebe] pb-px pr-[3px] pt-px">
        <MenuRows items={editMenu} />
      </div>
      <div className="absolute left-[227px] top-[348px] w-[191px] border border-t-white border-l-white border-r-black border-b-black bg-[#bebebe] pb-px pr-[2px] pt-px">
        <MenuRows items={trackMenu} />
      </div>
    </div>
  )
}
